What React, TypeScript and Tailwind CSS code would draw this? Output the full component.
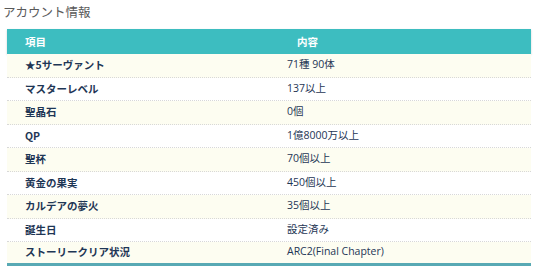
import React from "react";

interface Row {
  label: string;
  value: string;
}

const rows: Row[] = [
  { label: "★5サーヴァント", value: "71種 90体" },
  { label: "マスターレベル", value: "137以上" },
  { label: "聖晶石", value: "0個" },
  { label: "QP", value: "1億8000万以上" },
  { label: "聖杯", value: "70個以上" },
  { label: "黄金の果実", value: "450個以上" },
  { label: "カルデアの夢火", value: "35個以上" },
  { label: "誕生日", value: "設定済み" },
  { label: "ストーリークリア状況", value: "ARC2(Final Chapter)" },
];

const App: React.FC = () => {
  return (
    <div
      className="w-[535px] h-[278px] bg-white overflow-hidden"
      style={{ fontFamily: '"Noto Sans CJK JP", "Noto Sans", sans-serif' }}
    >
      <h2 className="pl-[3px] pt-[3px] h-[29px] text-[12.5px] leading-[18px] text-[#5a5a5a]">
        アカウント情報
      </h2>

      <div className="mx-[7px] w-[524px]">
        {/* 見出し */}
        <div className="flex h-[25px] items-center bg-[#3dbdc0] text-white font-bold text-[10.5px] shadow-[0_1px_2px_rgba(0,0,0,0.18)]">
          <div className="w-1/2 pl-[18px]">項目</div>
          <div className="w-1/2 pl-[28px]">内容</div>
        </div>

        {rows.map((row, i) => {
          const last = i === rows.length - 1;
          return (
            <div
              key={row.label}
              className={`flex h-[23.5px] items-center text-[10.5px] text-[#1e3655] ${
                i % 2 === 0 ? "bg-[#fdfdf1]" : "bg-white"
              } ${
                last
                  ? "border-b-[3px] border-solid border-[#58a9b4]"
                  : "border-b border-dotted border-[#d8d8d8]"
              }`}
            >
              <div className="w-1/2 pl-[18px] font-bold">{row.label}</div>
              <div className="w-1/2 pl-[18px] font-['Open_Sans','Noto_Sans_CJK_JP',sans-serif]">
                {row.value}
              </div>
            </div>
          );
        })}
      </div>
    </div>
  );
};

export default App;
